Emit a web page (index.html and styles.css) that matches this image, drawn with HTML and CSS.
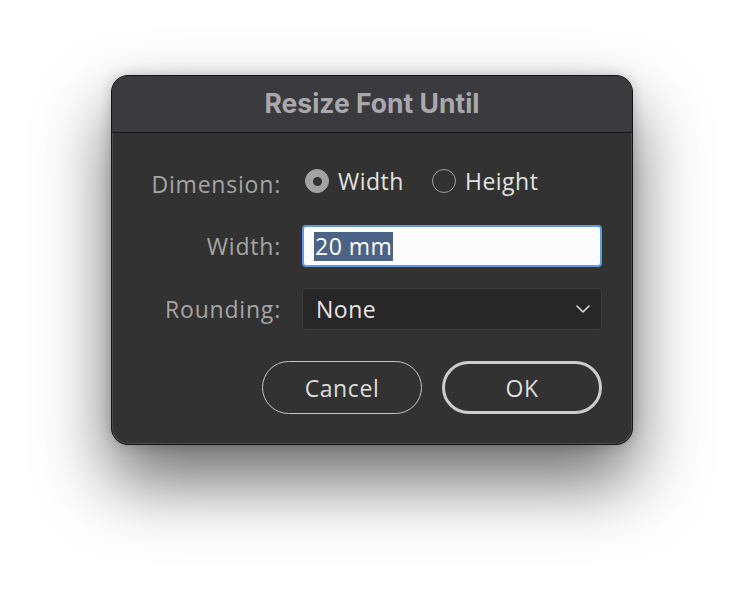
FILE: index.html
```html
<!DOCTYPE html>
<html>
<head>
<meta charset="utf-8">
<link rel="stylesheet" href="styles.css">
</head>
<body>
<div class="dialog">
  <div class="titlebar">Resize Font Until</div>
  <div class="content">
    <div class="form">
      <div class="label first">Dimension:</div>
      <div class="radios">
        <label class="radio"><span class="dot on"></span><span class="rtext">Width</span></label>
        <label class="radio"><span class="dot"></span><span class="rtext">Height</span></label>
      </div>
      <div class="label second">Width:</div>
      <div class="input"><span class="sel">20 mm</span></div>
      <div class="label third">Rounding:</div>
      <div class="select"><span class="seltext">None</span>
        <svg class="chev" width="14" height="8" viewBox="0 0 14 8"><path d="M1 1 L7 7 L13 1" fill="none" stroke="#d8d8d8" stroke-width="1.6" stroke-linecap="round" stroke-linejoin="round"/></svg>
      </div>
    </div>
    <div class="buttons">
      <div class="btn">Cancel</div>
      <div class="btn ok">OK</div>
    </div>
  </div>
</div>
</body>
</html>
```
FILE: styles.css
```css
html, body {
  margin: 0;
  background: #ffffff;
}
body {
  width: 744px;
  height: 592px;
  padding: 75px 0 0 111px;
  box-sizing: border-box;
  font-family: "Open Sans", "Noto Sans", sans-serif;
}
.dialog {
  width: 522px;
  height: 370px;
  box-sizing: border-box;
  border: 1px solid #141414;
  border-radius: 17px;
  background: #323232;
  box-shadow: inset 0 0 0 1px rgba(255,255,255,0.14), 0 36px 70px rgba(0,0,0,0.58), 0 0 14px rgba(0,0,0,0.2);
  overflow: hidden;
  display: flex;
  flex-direction: column;
}
.titlebar {
  height: 57px;
  flex: none;
  background: #3b3a3e;
  border-bottom: 1px solid #161616;
  box-sizing: border-box;
  display: flex;
  align-items: center;
  justify-content: center;
  font-family: Inter, "Noto Sans", sans-serif;
  font-weight: 700;
  font-size: 26.5px;
  color: #a9a8ad;
  padding-bottom: 3px;
}
.content {
  padding: 28px 30px 29px 0;
  display: flex;
  flex-direction: column;
}
.form {
  display: grid;
  grid-template-columns: 169px 300px;
  column-gap: 21px;
  grid-template-rows: 40px 66px 63px;
}
.label {
  color: #a5a5a5;
  font-size: 23px;
  letter-spacing: 0.8px;
  display: flex;
  align-items: center;
  justify-content: flex-end;
}
.label.first { padding-top: 5px; }
.label.second { padding-top: 24px; }
.label.third { padding-top: 21px; }
.radios {
  display: flex;
  align-items: center;
  gap: 28px;
  padding-left: 3px;
}
.radio {
  display: flex;
  align-items: center;
  gap: 9px;
  color: #e2e2e2;
  font-size: 23px;
  letter-spacing: 0.5px;
}
.dot {
  width: 24px;
  height: 24px;
  border-radius: 50%;
  border: 1.5px solid #9e9e9e;
  box-sizing: border-box;
  display: flex;
  align-items: center;
  justify-content: center;
}
.dot.on {
  background: #a3a3a3;
  border-color: #a3a3a3;
}
.dot.on::after {
  content: "";
  width: 9px;
  height: 9px;
  border-radius: 50%;
  background: #323232;
}
.input {
  margin-top: 24px;
  height: 42px;
  box-sizing: border-box;
  background: #fcfcfc;
  border: 2px solid #5d9be6;
  border-radius: 4px;
  display: flex;
  align-items: center;
  padding-left: 10px;
}
.sel {
  background: #4a6387;
  color: #ffffff;
  font-size: 23px;
  letter-spacing: 0.5px;
  line-height: 29px;
  padding: 0 1px;
}
.select {
  margin-top: 21px;
  height: 42px;
  box-sizing: border-box;
  background: #272727;
  border: 1px solid #3e3e3e;
  border-radius: 4px;
  display: flex;
  align-items: center;
  justify-content: space-between;
  padding: 0 11px 0 13px;
  color: #e6e6e6;
  font-size: 23px;
  letter-spacing: 0.5px;
}
.buttons {
  margin-top: 31px;
  display: flex;
  justify-content: flex-end;
  gap: 20px;
}
.btn {
  width: 160px;
  height: 53px;
  box-sizing: border-box;
  border: 1.5px solid #c4c4c4;
  border-radius: 27px;
  display: flex;
  align-items: center;
  justify-content: center;
  color: #dedede;
  font-size: 23px;
  letter-spacing: 0.6px;
}
.btn.ok {
  border: 3px solid #cdcdcd;
}
```
